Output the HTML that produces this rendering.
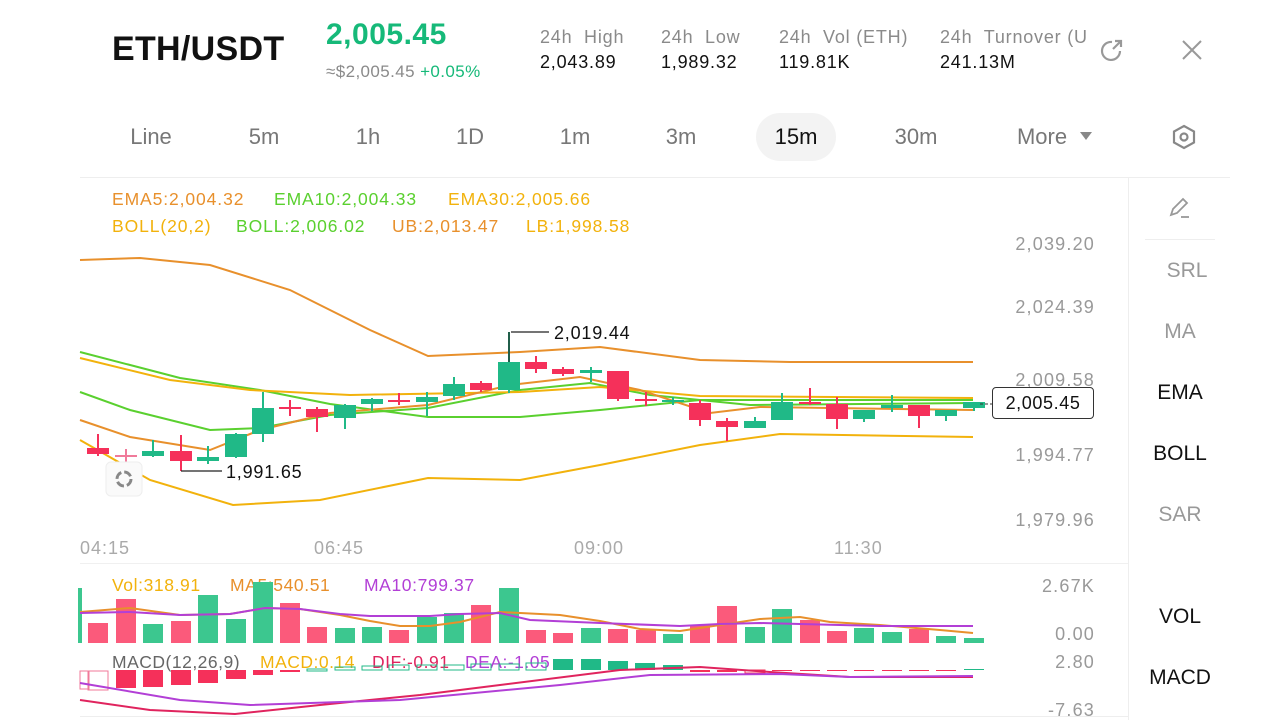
<!DOCTYPE html>
<html><head><meta charset="utf-8"><style>
*{margin:0;padding:0;box-sizing:border-box}
body{width:1280px;height:720px;background:#fff;font-family:"Liberation Sans",sans-serif;position:relative;overflow:hidden;color:#111}
.a{position:absolute;white-space:nowrap}
.g{color:#8a8a8a}
.tab{position:absolute;top:124px;font-size:22px;color:#777;transform:translateX(-50%)}
.r{position:absolute;left:1130px;width:100px;text-align:center;font-size:21px;color:#999}
.yl{position:absolute;right:185px;font-size:18px;color:#999;text-align:right;letter-spacing:1.2px}
.st{font-size:18px;letter-spacing:0.8px}
.lg{position:absolute;font-size:17.5px;letter-spacing:0.9px;white-space:nowrap}
.tl{position:absolute;top:538px;font-size:18px;color:#aaa;letter-spacing:1px}
</style></head><body>
<div class="a" style="left:112px;top:30px;font-size:34px;font-weight:bold;letter-spacing:0.3px">ETH/USDT</div>
<div class="a" style="left:326px;top:18px;font-size:30px;font-weight:bold;color:#16b979;letter-spacing:0.5px">2,005.45</div>
<div class="a g" style="left:326px;top:62px;font-size:17px;letter-spacing:0.4px">≈$2,005.45 <span style="color:#16b979">+0.05%</span></div>
<div class="a g st" style="left:540px;top:27px">24h&nbsp; High</div>
<div class="a st" style="left:540px;top:52px">2,043.89</div>
<div class="a g st" style="left:661px;top:27px">24h&nbsp; Low</div>
<div class="a st" style="left:661px;top:52px">1,989.32</div>
<div class="a g st" style="left:779px;top:27px">24h&nbsp; Vol (ETH)</div>
<div class="a st" style="left:779px;top:52px">119.81K</div>
<div class="a g st" style="left:940px;top:27px;width:146px;overflow:hidden">24h&nbsp; Turnover (U</div>
<div class="a st" style="left:940px;top:52px">241.13M</div>
<svg class="a" style="left:1098px;top:36px" width="28" height="28" viewBox="0 0 28 28" fill="none" stroke="#999" stroke-width="2.2"><path d="M22 15a9 9 0 1 1-8-9"/><path d="M15 13l8-8M17 5h6v6"/></svg>
<svg class="a" style="left:1180px;top:38px" width="24" height="24" stroke="#999" stroke-width="2"><path d="M3 3l18 18M21 3L3 21"/></svg>
<div style="position:absolute;left:756px;top:113px;width:80px;height:48px;border-radius:24px;background:#f3f3f3"></div>
<div class="tab" style="left:151px">Line</div><div class="tab" style="left:264px">5m</div><div class="tab" style="left:368px">1h</div><div class="tab" style="left:470px">1D</div><div class="tab" style="left:575px">1m</div><div class="tab" style="left:681px">3m</div><div class="tab" style="left:796px;color:#111">15m</div><div class="tab" style="left:916px">30m</div><div class="tab" style="left:1042px">More</div>
<svg class="a" style="left:1079px;top:131px" width="14" height="10"><path d="M1 1h12L7 9z" fill="#888"/></svg>
<svg class="a" style="left:1170px;top:123px" width="28" height="28" fill="none" stroke="#888" stroke-width="2.2"><path d="M14 3l10 5.5v11L14 25 4 19.5v-11z"/><circle cx="14" cy="14" r="3.5"/></svg>
<div class="a" style="left:80px;top:177px;width:1150px;height:1px;background:#eee"></div>
<div class="a" style="left:1128px;top:178px;width:1px;height:542px;background:#eee"></div>
<div class="a" style="left:80px;top:563px;width:1048px;height:1px;background:#f0f0f0"></div>
<div class="a" style="left:80px;top:716px;width:1048px;height:1px;background:#eee"></div>
<svg class="a" style="left:1167px;top:195px" width="26" height="26" fill="none" stroke="#999" stroke-width="1.8"><path d="M4 20l2-6L16 4l4 4-10 10z"/><path d="M14 22h8"/></svg>
<div class="a" style="left:1145px;top:239px;width:70px;height:1px;background:#eee"></div>
<div class="r" style="top:259px;padding-left:14px">SRL</div>
<div class="r" style="top:320px">MA</div>
<div class="r" style="top:381px;color:#111">EMA</div>
<div class="r" style="top:442px;color:#111">BOLL</div>
<div class="r" style="top:503px">SAR</div>
<div class="r" style="top:605px;color:#111">VOL</div>
<div class="r" style="top:666px;color:#111">MACD</div>
<div class="lg" style="left:112px;top:189px;color:#e8902c">EMA5:2,004.32</div>
<div class="lg" style="left:274px;top:189px;color:#5ad02f">EMA10:2,004.33</div>
<div class="lg" style="left:448px;top:189px;color:#f2b20c">EMA30:2,005.66</div>
<div class="lg" style="left:112px;top:216px;color:#f2b20c">BOLL(20,2)</div>
<div class="lg" style="left:236px;top:216px;color:#5ad02f">BOLL:2,006.02</div>
<div class="lg" style="left:392px;top:216px;color:#e8902c">UB:2,013.47</div>
<div class="lg" style="left:526px;top:216px;color:#f2b20c">LB:1,998.58</div>
<div class="yl" style="top:234px">2,039.20</div><div class="yl" style="top:297px">2,024.39</div><div class="yl" style="top:370px">2,009.58</div><div class="yl" style="top:445px">1,994.77</div><div class="yl" style="top:510px">1,979.96</div>
<div class="tl" style="left:80px">04:15</div><div class="tl" style="left:314px">06:45</div><div class="tl" style="left:574px">09:00</div><div class="tl" style="left:834px">11:30</div>
<div class="yl" style="top:576px">2.67K</div><div class="yl" style="top:624px">0.00</div><div class="yl" style="top:652px">2.80</div><div class="yl" style="top:700px">-7.63</div>
<svg class="a" style="left:0;top:0" width="1128" height="720">
<g fill="none" stroke-width="2">
<polyline stroke="#e8902c" points="80,260 140,258 210,265 290,290 370,330 428,356 520,352 600,347 700,360 790,362 973,362"/>
<polyline stroke="#f2b20c" points="80,440 150,480 233,505 320,500 428,478 520,480 600,465 700,445 780,434 973,437"/>
<polyline stroke="#5ad02f" points="80,352 180,378 260,390 330,404 428,417 520,417 600,410 700,400 780,400 973,400"/>
<polyline stroke="#5ad02f" points="80,392 130,410 210,430 260,428 330,415 428,408 520,390 590,383 650,395 750,405 973,403"/>
<polyline stroke="#f2b20c" points="80,358 170,380 250,390 350,395 520,392 600,387 700,396 973,398"/>
<polyline stroke="#e8902c" points="80,420 130,437 210,450 260,430 330,413 428,405 510,385 580,377 640,390 710,413 760,407 973,410"/>
</g>
<g id="c"></g>
<path d="M511 332h38M509 332v30" stroke="#222" stroke-width="1.2" fill="none"/>
<line x1="181" y1="471" x2="222" y2="471" stroke="#222" stroke-width="1.2"/>
<text x="226" y="478" font-size="18" letter-spacing="0.8" font-family="Liberation Sans" fill="#111">1,991.65</text>
<text x="554" y="339" font-size="18" letter-spacing="0.8" font-family="Liberation Sans" fill="#111">2,019.44</text>
<line x1="980" y1="404" x2="992" y2="404" stroke="#333" stroke-dasharray="3 2"/>
<rect x="106" y="462" width="36" height="34" rx="5" fill="#fafafa" stroke="#eee"/>
<circle cx="124" cy="479" r="7" fill="none" stroke="#888" stroke-width="3" stroke-dasharray="8 3"/>
<g font-size="17.5" letter-spacing="0.6" font-family="Liberation Sans">
<text x="112" y="591" fill="#f2b20c">Vol:318.91</text>
<text x="230" y="591" fill="#e8902c">MA5:540.51</text>
<text x="364" y="591" fill="#b23fd6">MA10:799.37</text>
</g>
<g id="v"></g>
<g fill="none" stroke-width="2">
<polyline stroke="#e8902c" points="80,612 130,608 180,615 230,614 265,608 300,609 340,615 370,621 400,626 430,626 460,622 500,612 560,615 600,621 640,629 680,631 720,625 760,619 800,617 830,622 880,625 940,630 973,633"/>
<polyline stroke="#b23fd6" points="80,613 130,612 180,615 230,614 265,608 300,609 340,614 370,616 430,616 460,614 500,613 530,620 600,623 680,626 720,624 760,623 800,624 880,626 973,626"/>
</g>
<g font-size="17.5" letter-spacing="0.5" font-family="Liberation Sans">
<text x="112" y="668" fill="#666">MACD(12,26,9)</text>
<text x="260" y="668" fill="#f2b20c">MACD:0.14</text>
<text x="372" y="668" fill="#e0245e">DIF:-0.91</text>
<text x="465" y="668" fill="#b23fd6">DEA:-1.05</text>
</g>
<g id="m"></g>
<g fill="none" stroke-width="2">
<polyline stroke="#e0245e" points="80,700 150,710 235,714 320,705 420,695 500,685 620,670 700,667 770,672 850,677 973,677"/>
<polyline stroke="#b23fd6" points="80,683 180,700 250,705 400,700 560,685 650,675 780,674 850,677 973,676"/>
</g>
</svg>
<div class="a" style="left:992px;top:387px;width:102px;height:32px;border:1px solid #333;border-radius:4px;background:#fff;font-size:18px;text-align:center;line-height:30px;letter-spacing:0.6px">2,005.45</div>
<script>
var G="#20b987",R="#f5305a",ns="http://www.w3.org/2000/svg";
function el(p,t,a){var e=document.createElementNS(ns,t);for(var k in a)e.setAttribute(k,a[k]);p.appendChild(e);}
var C=[[98,'r',448,454,434,456],[126,'p',455,456,449,464],[153,'g',451,456,440,457],[181,'r',451,461,435,471],[208,'g',457,461,446,464],[236,'g',434,457,433,458],[263,'g',408,434,392,442],[290,'r',407,409,400,416],[317,'r',409,417,407,432],[345,'g',405,418,404,429],[372,'g',399,404,398,411],[399,'r',400,402,393,405],[427,'g',397,402,392,416],[454,'g',384,396,377,400],[481,'r',383,390,381,392],[509,'g',362,390,332,393],[536,'r',362,369,356,373],[563,'r',369,374,367,376],[591,'g',370,373,367,382],[618,'r',371,399,371,401],[646,'r',399,401,392,406],[673,'g',400,402,397,405],[700,'r',403,420,400,426],[727,'r',421,427,418,441],[755,'g',421,428,417,428],[782,'g',402,420,393,420],[810,'r',402,404,388,405],[837,'r',404,419,397,429],[864,'g',410,419,410,422],[892,'g',405,408,395,412],[919,'r',405,416,405,428],[946,'g',410,416,410,421],[974,'g',402,408,402,411]];
var c=document.getElementById('c');
C.forEach(function(d){var col=d[1]=='g'?G:(d[1]=='p'?'#f07a9a':R);el(c,'line',{x1:d[0],x2:d[0],y1:d[4],y2:d[5],stroke:col,'stroke-width':2});el(c,'rect',{x:d[0]-11,y:d[2],width:22,height:Math.max(2,d[3]-d[2]),fill:col});});
var V=[623,599,624,621,595,619,582,603,627,628,627,630,617,613,605,588,630,633,628,629,630,634,625,606,627,609,620,631,628,632,629,636,638];
var v=document.getElementById('v');
el(v,'rect',{x:78,y:588,width:4,height:55,fill:'#3cc78f'});
V.forEach(function(t,i){var col=C[i][1]=='g'?'#3cc78f':'#fb5a7b';el(v,'rect',{x:C[i][0]-10,y:t,width:20,height:643-t,fill:col});});
var M=[[98,'h',671,690],[126,'r',670,688],[153,'r',670,687],[181,'r',670,685],[208,'r',670,683],[236,'r',670,679],[263,'r',670,675],[290,'r',670,672],[317,'gh',669,671],[345,'gh',667,670],[372,'gh',666,670],[399,'gh',665,670],[427,'gh',665,670],[454,'gh',665,670],[481,'gh',664,670],[509,'gh',664,670],[536,'gh',663,670],[563,'g',659,670],[591,'g',659,670],[618,'g',661,670],[645,'g',663,670],[673,'g',665,670],[700,'r',670,672],[727,'r',670,672],[755,'rh',670,673],[782,'r',670,671],[810,'r',670,671],[837,'r',670,671],[864,'r',670,671],[892,'r',670,671],[919,'r',670,671],[946,'r',670,670.5],[974,'g',669,670]];
var m=document.getElementById('m');
el(m,'rect',{x:80,y:671,width:9,height:18,fill:'none',stroke:'#f07a9a'});
M.forEach(function(d){var h=d[1].indexOf('h')>=0,col=d[1][0]=='g'?G:R;if(d[1]=='h')col='#f07a9a';el(m,'rect',{x:d[0]-10,y:d[2],width:20,height:Math.max(1,d[3]-d[2]),fill:h?'none':col,stroke:h?col:'none'});});
</script>
</body></html>
